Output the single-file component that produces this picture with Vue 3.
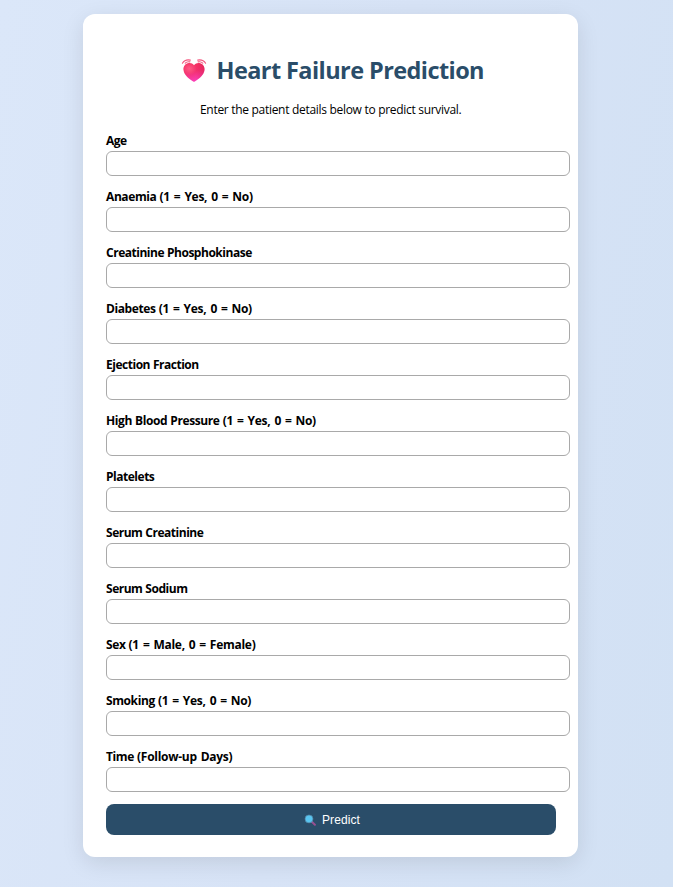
<script setup>
import { reactive } from 'vue'

const fields = [
  { id: 'age', name: 'Age' },
  { id: 'anaemia', name: 'Anaemia', hint: '(1 = Yes, 0 = No)' },
  { id: 'cpk', name: 'Creatinine Phosphokinase' },
  { id: 'diabetes', name: 'Diabetes', hint: '(1 = Yes, 0 = No)' },
  { id: 'ejection', name: 'Ejection Fraction' },
  { id: 'pressure', name: 'High Blood Pressure', hint: '(1 = Yes, 0 = No)' },
  { id: 'platelets', name: 'Platelets' },
  { id: 'creatinine', name: 'Serum Creatinine' },
  { id: 'sodium', name: 'Serum Sodium' },
  { id: 'sex', name: 'Sex', hint: '(1 = Male, 0 = Female)' },
  { id: 'smoking', name: 'Smoking', hint: '(1 = Yes, 0 = No)' },
  { id: 'time', name: 'Time', hint: '(Follow-up Days)' }
]
const values = reactive({})
</script>

<template>
  <div class="page">
    <main class="card">
      <h1 class="title">
        <svg class="heart" viewBox="0 0 26 26" aria-hidden="true">
          <defs>
            <linearGradient id="heartFill" x1="0.35" y1="0" x2="0.6" y2="1">
              <stop offset="0" stop-color="#f5305f" />
              <stop offset="0.45" stop-color="#f3316f" />
              <stop offset="1" stop-color="#fb3fbd" />
            </linearGradient>
            <radialGradient id="heartGlow" cx="0.28" cy="0.3" r="0.35">
              <stop offset="0" stop-color="#ff5a86" />
              <stop offset="1" stop-color="#ff5a86" stop-opacity="0" />
            </radialGradient>
            <linearGradient id="heartShade" x1="0" y1="0" x2="1" y2="0">
              <stop offset="0.6" stop-color="#d01848" stop-opacity="0" />
              <stop offset="1" stop-color="#d01848" stop-opacity="0.4" />
            </linearGradient>
          </defs>
          <g fill="none" stroke="#f4557e" stroke-width="1.1" stroke-linecap="round">
            <path d="M1.400 5.200C3 2.600 6 1.500 9.300 2.100M4.200 5.200C5.400 4 7 3.500 8.900 3.900" />
            <path d="M24.600 5.200C23 2.600 20 1.500 16.700 2.100M21.800 5.200C20.600 4 19 3.500 17.100 3.900" />
          </g>
          <path v-for="f in ['heartFill', 'heartGlow', 'heartShade']" :key="f" :fill="`url(#${f})`" d="M13 7.300C11.700 5.600 9.800 4.900 7.900 5.100C4.700 5.500 2.200 8.200 2.500 11.700C2.900 16.400 7.200 20.300 12.200 23.500Q13 24.100 13.800 23.500C18.800 20.300 23.100 16.400 23.500 11.700C23.800 8.200 21.300 5.500 18.100 5.100C16.200 4.900 14.300 5.600 13 7.300Z" />
        </svg>
        <span class="title-text">Heart Failure Prediction</span>
      </h1>
      <p class="intro">Enter the patient details below to predict survival.</p>
      <form class="form" @submit.prevent>
        <div v-for="f in fields" :key="f.id" class="field">
          <label :for="f.id"><span :class="['name', { plain: !f.hint }]">{{ f.name }}{{ f.hint ? '&nbsp;' : '' }}</span><span v-if="f.hint" class="hint">{{ f.hint }}</span></label>
          <input :id="f.id" v-model="values[f.id]" type="text" />
        </div>
        <button class="submit" type="submit">
          <svg class="glass" viewBox="0 0 12 12" aria-hidden="true">
            <path d="M7.800 7.800L10.900 10.700" stroke="#985092" stroke-width="2" stroke-linecap="round" />
            <circle cx="5" cy="4.900" r="4" fill="#59c5f0" stroke="#507d9c" stroke-width="0.700" />
          </svg>
          <span>Predict</span>
        </button>
      </form>
    </main>
  </div>
</template>

<style>
body {
  margin: 0;
}
</style>

<style scoped>
.page {
  box-sizing: border-box;
  height: 887px;
  padding: 14px 0 0 83px;
  background: linear-gradient(100deg, #dbe7f9, #d7e3f6 50%, #d2e1f4);
  font-family: "Open Sans", "Noto Sans", sans-serif;
  overflow: hidden;
}
.card {
  box-sizing: border-box;
  width: 495px;
  height: 843px;
  padding: 39px 22px 0 23px;
  border-radius: 12px;
  background: #fff;
  box-shadow: 0 6px 22px rgba(0, 0, 0, 0.1);
}
.title {
  display: flex;
  align-items: center;
  height: 34px;
  margin: 0 0 0 75px;
  color: #2a4d69;
  font-size: 23.5px;
  line-height: 34px;
  font-weight: 700;
}
.heart {
  width: 26px;
  height: 26px;
  margin: 1px 9.500px 0 0;
}
.title-text {
  white-space: nowrap;
  letter-spacing: -0.58px;
}
.intro {
  margin: 14px 0 0;
  padding-left: 94px;
  color: #000;
  font-size: 12px;
  line-height: 18px;
  letter-spacing: -0.3px;
  white-space: nowrap;
}
.form {
  margin-top: 13px;
}
.field {
  height: 56px;
}
label {
  display: block;
  height: 19px;
  color: #000;
  font-size: 12px;
  line-height: 18px;
  font-weight: 700;
  white-space: nowrap;
}
.name {
  letter-spacing: -0.4px;
  word-spacing: 0.4px;
}
.plain {
  letter-spacing: -0.48px;
  word-spacing: 0.3px;
}
.hint {
  letter-spacing: -0.27px;
  word-spacing: 1.1px;
}
input {
  display: block;
  box-sizing: border-box;
  width: 464px;
  height: 25px;
  padding: 0 8px;
  border: 1px solid #a9a9a9;
  border-radius: 6px;
  background: #fff;
  outline: none;
}
.submit {
  display: flex;
  align-items: center;
  justify-content: center;
  box-sizing: border-box;
  width: 450px;
  height: 31px;
  padding: 0 0 0 2px;
  border: 0;
  border-radius: 8px;
  background: #2a4d69;
  color: #fff;
  font: 12px "Liberation Sans", sans-serif;
  letter-spacing: 0.08px;
}
.glass {
  width: 12px;
  height: 12px;
  margin-right: 6px;
}
</style>
